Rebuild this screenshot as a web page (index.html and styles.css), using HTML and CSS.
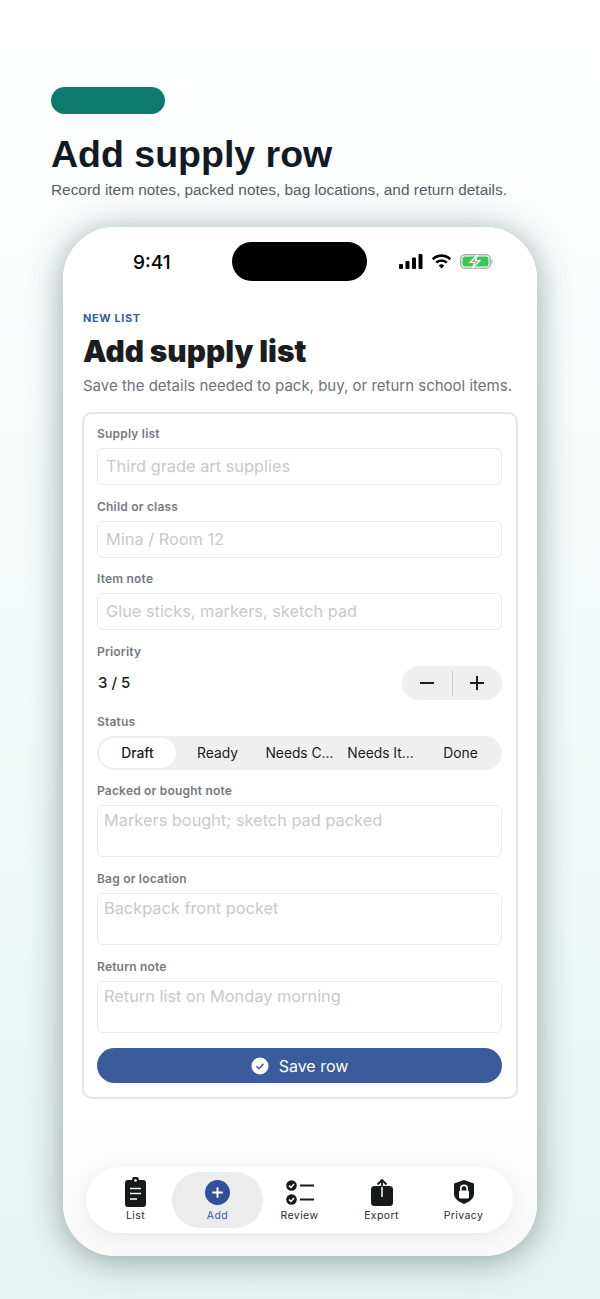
FILE: index.html
```html
<!DOCTYPE html>
<html lang="en">
<head>
  <meta charset="UTF-8">
  <title>Add supply row</title>
  <link rel="stylesheet" href="styles.css">
</head>
<body>

  <header class="promo">
    <div class="promo-pill"></div>
    <h1>Add supply row</h1>
    <p>Record item notes, packed notes, bag locations, and return details.</p>
  </header>

  <div class="phone">
    <div class="status-bar">
      <span class="clock">9:41</span>
      <div class="island"></div>
      <div class="status-icons">
        <svg width="24" height="15" viewBox="0 0 24 15">
          <rect x="0" y="10" width="4" height="5" rx="1"/>
          <rect x="6.500" y="7" width="4" height="8" rx="1"/>
          <rect x="13" y="3.500" width="4" height="11.500" rx="1"/>
          <rect x="19.500" y="0" width="4" height="15" rx="1"/>
        </svg>
        <svg width="21" height="15" viewBox="0 0 20 15" fill="none" stroke="#000" stroke-width="2.600">
          <path d="M1.300 5.200a12.400 12.400 0 0 1 17.400 0"/>
          <path d="M4.700 8.600a7.600 7.600 0 0 1 10.600 0"/>
          <path d="M10 14.500l-2.700-2.900a3.800 3.800 0 0 1 5.400 0z" fill="#000" stroke="none"/>
        </svg>
        <svg width="33" height="15" viewBox="0 0 33 15">
          <rect x="0.800" y="0.800" width="29.400" height="13.400" rx="4" fill="none" stroke="#a9b3ab" stroke-width="1.500"/>
          <rect x="2.500" y="2.500" width="26" height="10" rx="2.600" fill="#35c759"/>
          <path d="M31.500 5c1.300.4 1.300 4.600 0 5z" fill="#9aa39c"/>
          <path d="M17.500 0.800L10 8.500h4.500l-2 5.700L20 6.500h-4.500z" fill="#a3aba5" stroke="#fff" stroke-width="1.200"/>
        </svg>
      </div>
    </div>

    <main class="screen">
      <div class="eyebrow">NEW LIST</div>
      <h2>Add supply list</h2>
      <p class="lead">Save the details needed to pack, buy, or return school items.</p>

      <form class="card">
        <div class="field">
          <label>Supply list</label>
          <input type="text" placeholder="Third grade art supplies">
        </div>
        <div class="field">
          <label>Child or class</label>
          <input type="text" placeholder="Mina / Room 12">
        </div>
        <div class="field">
          <label>Item note</label>
          <input type="text" placeholder="Glue sticks, markers, sketch pad">
        </div>
        <div class="field field-priority">
          <label>Priority</label>
          <div class="priority-row">
            <span class="priority-value">3 / 5</span>
            <div class="stepper">
              <svg width="16" height="16" viewBox="0 0 16 16"><path d="M1 8h14" stroke="#1b1d20" stroke-width="2"/></svg>
              <span class="stepper-line"></span>
              <svg width="16" height="16" viewBox="0 0 16 16"><path d="M1 8h14M8 1v14" stroke="#1b1d20" stroke-width="2"/></svg>
            </div>
          </div>
        </div>
        <div class="field field-status">
          <label>Status</label>
          <div class="segments">
            <span class="segment segment-on">Draft</span>
            <span class="segment">Ready</span>
            <span class="segment">Needs C...</span>
            <span class="segment">Needs It...</span>
            <span class="segment">Done</span>
          </div>
        </div>
        <div class="field field-note">
          <label>Packed or bought note</label>
          <textarea placeholder="Markers bought; sketch pad packed"></textarea>
        </div>
        <div class="field field-note">
          <label>Bag or location</label>
          <textarea placeholder="Backpack front pocket"></textarea>
        </div>
        <div class="field field-note">
          <label>Return note</label>
          <textarea placeholder="Return list on Monday morning"></textarea>
        </div>
        <button type="button" class="save">
          <svg width="18" height="18" viewBox="0 0 18 18">
            <circle cx="9" cy="9" r="8.500" fill="#fff"/>
            <path d="M5.500 9.300l2.400 2.400 4.600-5" fill="none" stroke="#3b5c9c" stroke-width="1.600"/>
          </svg>
          Save row
        </button>
      </form>
    </main>

    <nav class="tabs">
      <div class="tab">
        <div class="tab-icon">
          <svg width="21" height="30" viewBox="0 0 21 30">
            <path d="M3 3h4a3.500 3.500 0 0 1 7 0h4a3 3 0 0 1 3 3v21a3 3 0 0 1-3 3H3a3 3 0 0 1-3-3V6a3 3 0 0 1 3-3z" fill="#17181a"/>
            <circle cx="10.500" cy="3.500" r="1.300" fill="#fff"/>
            <path d="M5 11.500h11M5 16.500h11M5 22h7" stroke="#fff" stroke-width="1.700"/>
          </svg>
        </div>
        <span>List</span>
      </div>
      <div class="tab tab-on">
        <div class="tab-icon">
          <svg width="25" height="25" viewBox="0 0 26 26">
            <circle cx="13" cy="13" r="13" fill="#2f5199"/>
            <path d="M13 7.500v11M7.500 13h11" stroke="#fff" stroke-width="2"/>
          </svg>
        </div>
        <span>Add</span>
      </div>
      <div class="tab">
        <div class="tab-icon">
          <svg width="28" height="25" viewBox="0 0 28 25">
            <circle cx="5.500" cy="5.500" r="5.300" fill="#17181a"/>
            <path d="M3 5.500l2 2 3-3.500" fill="none" stroke="#fff" stroke-width="1.500"/>
            <path d="M14 5.500h14" stroke="#17181a" stroke-width="2"/>
            <circle cx="5.500" cy="19.500" r="5.300" fill="#17181a"/>
            <path d="M3 19.500l2 2 3-3.500" fill="none" stroke="#fff" stroke-width="1.500"/>
            <path d="M14 19.500h14" stroke="#17181a" stroke-width="2"/>
          </svg>
        </div>
        <span>Review</span>
      </div>
      <div class="tab">
        <div class="tab-icon">
          <svg width="22" height="27" viewBox="0 0 22 27">
            <rect x="0" y="7" width="22" height="20" rx="3.500" fill="#17181a"/>
            <path d="M11 7v11" stroke="#fff" stroke-width="1.500"/>
            <path d="M11 8V1.500M6.500 5.500L11 1l4.500 4.500" fill="none" stroke="#17181a" stroke-width="1.800"/>
          </svg>
        </div>
        <span>Export</span>
      </div>
      <div class="tab">
        <div class="tab-icon">
          <svg width="20" height="24" viewBox="0 0 20 24">
            <path d="M10 0l10 3.500v10c0 5-4 8-10 10.500C4 21.500 0 18.500 0 13.500v-10z" fill="#17181a"/>
            <path d="M6.800 11V8.500a3.200 3.200 0 0 1 6.400 0V11" fill="none" stroke="#fff" stroke-width="1.700"/>
            <rect x="5" y="10.500" width="10" height="8" rx="1.500" fill="#fff"/>
          </svg>
        </div>
        <span>Privacy</span>
      </div>
    </nav>
  </div>

</body>
</html>
```

FILE: styles.css
```css
* {
  box-sizing: border-box;
}
html {
  height: 100%;
}
body {
  margin: 0;
  width: 600px;
  height: 1299px;
  overflow: hidden;
  background: linear-gradient(180deg, #ffffff 0%, #f6fbfa 40%, #e7f5f2 100%);
  font-family: Inter, sans-serif;
  color: #1b1d20;
}

.promo {
  padding: 87px 51px 0;
}
.promo-pill {
  width: 114px;
  height: 27px;
  border-radius: 14px;
  background: #0e7a6e;
}
.promo h1 {
  margin: 18px 0 0;
  font-family: "Liberation Sans", Arial, sans-serif;
  font-size: 37.500px;
  line-height: 44px;
  font-weight: 700;
  color: #111a26;
}
.promo p {
  margin: 4px 0 0;
  font-family: "Liberation Sans", Arial, sans-serif;
  font-size: 15.400px;
  line-height: 20px;
  color: #555e66;
}

.phone {
  position: relative;
  width: 474px;
  height: 1029px;
  margin: 27px 0 0 63px;
  border-radius: 52px;
  background: linear-gradient(180deg, #ffffff 85%, #f9f9f9 100%);
  box-shadow: 0 4px 34px rgba(30, 60, 60, 0.45);
}

.status-bar {
  display: flex;
  align-items: center;
  height: 39px;
  position: relative;
  top: 15px;
}
.clock {
  width: 169px;
  padding: 2px 0 0 70px;
  font-size: 19px;
  font-weight: 500;
  color: #000;
}
.island {
  width: 135px;
  height: 39px;
  border-radius: 20px;
  background: #000;
}
.status-icons {
  display: flex;
  align-items: center;
  gap: 8px;
  margin-left: 32px;
}

.screen {
  padding: 0 19px;
  margin-top: 45px;
}
.eyebrow {
  padding-left: 1px;
  font-size: 11px;
  line-height: 14px;
  font-weight: 700;
  letter-spacing: 0.6px;
  color: #3b5c9c;
}
.screen h2 {
  margin: 8px 0 0 1px;
  font-size: 29.800px;
  line-height: 36px;
  font-weight: 900;
  color: #1b1d20;
}
.lead {
  margin: 7px 0 0 1px;
  font-size: 15px;
  line-height: 20px;
  color: #6f7378;
}

.card {
  display: flex;
  flex-direction: column;
  margin-top: 16px;
  height: 687px;
  padding: 13px 14px 14px 13px;
  border: 2px solid #e3e5e7;
  border-radius: 10px;
  background: #fff;
}
.field {
  display: flex;
  flex-direction: column;
  gap: 7px;
  margin-bottom: 14.500px;
}
.field-priority {
  margin-bottom: 15.500px;
}
.field-status {
  margin-bottom: 14px;
}
.field-note {
  margin-bottom: 15px;
}
.field label {
  font-size: 12px;
  line-height: 14px;
  font-weight: 600;
  letter-spacing: 0.2px;
  color: #767a80;
}
.field input,
.field textarea {
  width: 100%;
  border: 1px solid #e9eaec;
  border-radius: 6px;
  background: #fff;
  font-family: Inter, sans-serif;
  font-size: 16.350px;
  outline: none;
  resize: none;
}
.field input {
  height: 37px;
  padding: 0 8px 1px;
}
.field textarea {
  display: block;
  height: 52px;
  padding: 4px 6px;
  line-height: 20px;
}
.field input::placeholder,
.field textarea::placeholder {
  color: #c8c9cc;
  opacity: 1;
}

.priority-row {
  display: flex;
  align-items: center;
  justify-content: space-between;
}
.priority-value {
  padding-left: 1px;
  font-size: 15px;
  font-weight: 500;
}
.stepper {
  display: flex;
  align-items: center;
  justify-content: space-between;
  width: 100px;
  height: 34px;
  padding: 0 17px;
  border-radius: 17px;
  background: #efefef;
}
.stepper-line {
  width: 1px;
  height: 26px;
  background: #c9c9cb;
}

.segments {
  display: grid;
  grid-template-columns: 77px 83px 81px 81px 1fr;
  align-items: center;
  height: 34px;
  padding: 2px;
  border-radius: 17px;
  background: #efefef;
}
.segment {
  font-size: 13.800px;
  font-weight: 400;
  line-height: 30px;
  text-align: center;
  white-space: nowrap;
}
.segment-on {
  border-radius: 15px;
  background: #fff;
  font-weight: 500;
}

.save {
  display: flex;
  flex-shrink: 0;
  align-items: center;
  justify-content: center;
  gap: 10px;
  width: 100%;
  height: 35px;
  border: none;
  border-radius: 18px;
  background: #3b5c9c;
  color: #fff;
  font-family: Inter, sans-serif;
  font-size: 16px;
}

.tabs {
  position: absolute;
  left: 23px;
  bottom: 23px;
  display: grid;
  grid-template-columns: repeat(5, 82px);
  justify-content: center;
  align-items: center;
  width: 427px;
  height: 66px;
  border-radius: 33px;
  background: #fff;
  box-shadow: 0 4px 20px rgba(0, 0, 0, 0.07);
}
.tab {
  display: flex;
  flex-direction: column;
  align-items: center;
  height: 56px;
  padding-top: 5px;
  gap: 2px;
  font-size: 10.500px;
  line-height: 13px;
  font-weight: 400;
  letter-spacing: 0.4px;
  color: #2a2c30;
}
.tab-icon {
  display: flex;
  align-items: center;
  height: 30px;
}
.tab-on {
  width: 91px;
  justify-self: center;
  border-radius: 28px;
  background: #ececec;
  color: #3b5c9c;
}
```
